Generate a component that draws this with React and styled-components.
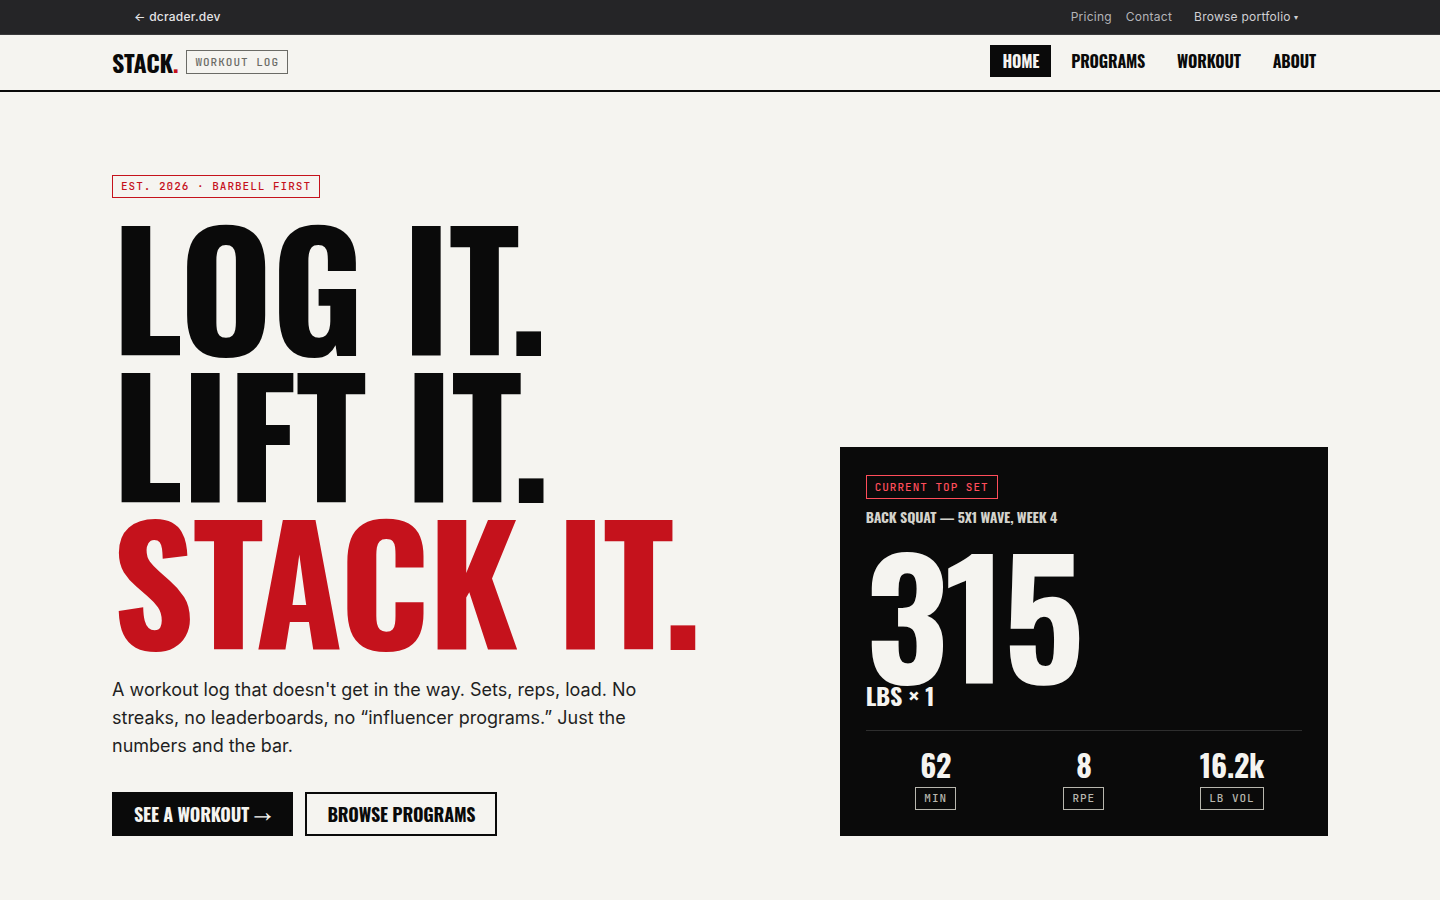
import React from "react";
import styled, { createGlobalStyle } from "styled-components";

const ink = "#0a0a0a";
const paper = "#f5f4f0";
const red = "#c5121c";
const display = `Oswald, "Noto Sans Math", "Liberation Sans", sans-serif`;
const mono = `"JetBrains Mono", "Liberation Mono", monospace`;

const Global = createGlobalStyle`
  *, *::before, *::after { box-sizing: border-box; }
  body {
    margin: 0;
    background: ${paper};
    color: ${ink};
    font: 16px/24px Inter, "Liberation Sans", sans-serif;
  }
  h1, h2, p, dl, dd { margin: 0; }
  a { color: inherit; text-decoration: none; }
`;

const SiteBar = styled.div`
  background: #252527;
  border-bottom: 1px solid #3a3a3c;
  font-size: 12px;
  line-height: 18px;
  letter-spacing: 0.02em;
`;

const SiteBarInner = styled.div`
  display: flex;
  justify-content: space-between;
  align-items: center;
  max-width: 1216px;
  margin: 0 auto;
  padding: 8px 22px;
`;

const HomeLink = styled.a`
  color: #e4e4e6;
  font-weight: 500;
`;

const SiteLinks = styled.nav`
  display: flex;
  align-items: center;
  gap: 14px;
  color: #b4b4b8;
`;

const PortfolioButton = styled.button`
  display: flex;
  align-items: center;
  gap: 3px;
  margin: 0;
  padding: 0 8px;
  border: 0;
  background: none;
  color: #d0d0d4;
  font: inherit;
  letter-spacing: inherit;
`;

const Caret = styled.span`
  font-size: 8px;
`;

const Header = styled.header`
  border-bottom: 2px solid ${ink};
`;

const HeaderInner = styled.div`
  display: flex;
  justify-content: space-between;
  align-items: flex-start;
  max-width: 1280px;
  margin: 0 auto;
  padding: 10px 32px 11px;
`;

const Brand = styled.a`
  display: flex;
  align-items: center;
  gap: 8px;
  font: 700 24px/34px ${display};
  letter-spacing: -0.01em;
`;

const Accent = styled.span`
  color: ${red};
`;

const Tag = styled.span`
  padding: 3px 8px;
  border: 1px solid currentColor;
  color: ${(p) => p.$color};
  font: 500 11px/${(p) => (p.$tall ? 16 : 15)}px ${mono};
  letter-spacing: 1px;
  text-transform: uppercase;
`;

const MainNav = styled.nav`
  display: flex;
  gap: 8px;
`;

const NavLink = styled.a`
  padding: 4px 12px;
  font: 700 16px/24px ${display};
  letter-spacing: -0.01em;
  text-transform: uppercase;
  background: ${(p) => (p["aria-current"] ? ink : "transparent")};
  color: ${(p) => (p["aria-current"] ? paper : ink)};
`;

const Hero = styled.main`
  display: grid;
  grid-template-columns: 1.4fr 1fr;
  gap: 44px;
  align-items: end;
  max-width: 1280px;
  margin: 0 auto;
  padding: 83px 32px 64px;
`;

const Intro = styled.section`
  display: flex;
  flex-direction: column;
  align-items: flex-start;
`;

const Headline = styled.h1`
  margin: 12px 0 25px;
  font: 700 160px/147px ${display};
  letter-spacing: -0.01em;
  text-transform: uppercase;
`;

const Line = styled.span`
  display: block;
  color: ${(p) => (p.$accent ? red : "inherit")};
`;

const Lede = styled.p`
  max-width: 544px;
  color: #1f1f1f;
  font-size: 18px;
  line-height: 28px;
`;

const Actions = styled.div`
  display: flex;
  gap: 12px;
  margin-top: 32px;
`;

const Action = styled.a`
  padding: 8px 20px;
  border: 2px solid ${ink};
  background: ${(p) => (p.$solid ? ink : "transparent")};
  color: ${(p) => (p.$solid ? paper : ink)};
  font: 700 18px/24px ${display};
  font-synthesis: none;
  letter-spacing: -0.01em;
  text-transform: uppercase;
`;

const Card = styled.section`
  display: flex;
  flex-direction: column;
  align-items: flex-start;
  padding: 28px 26px 26px;
  background: ${ink};
  color: ${paper};
`;

const Lift = styled.h2`
  margin-top: 8px;
  color: #d4d3cc;
  font: 700 14px/20px ${display};
  letter-spacing: -0.01em;
  text-transform: uppercase;
`;

const Load = styled.p`
  margin: 17px 0 2px;
  font: 700 160px/136px ${display};
  letter-spacing: -0.02em;
`;

const Unit = styled.p`
  font: 700 24px/26px ${display};
  letter-spacing: -0.01em;
`;

const Stats = styled.dl`
  display: grid;
  grid-template-columns: repeat(3, 1fr);
  gap: 8px;
  width: 100%;
  margin-top: 22px;
  padding-top: 16px;
  border-top: 1px solid #2e2e2e;
`;

const Stat = styled.div`
  display: flex;
  flex-direction: column-reverse;
  align-items: center;
  gap: 4px;
`;

const Value = styled.dd`
  font: 700 30px/36px ${display};
  letter-spacing: -0.01em;
`;

const stats = [
  ["Min", "62"],
  ["RPE", "8"],
  ["Lb vol", "16.2k"],
];

export default function App() {
  return (
    <>
      <Global />
      <SiteBar>
        <SiteBarInner>
          <HomeLink href="#">← dcrader.dev</HomeLink>
          <SiteLinks aria-label="Site">
            <a href="#pricing">Pricing</a>
            <a href="#contact">Contact</a>
            <PortfolioButton type="button">
              Browse portfolio <Caret aria-hidden="true">▾</Caret>
            </PortfolioButton>
          </SiteLinks>
        </SiteBarInner>
      </SiteBar>
      <Header>
        <HeaderInner>
          <Brand href="#home">
            <span>
              STACK<Accent>.</Accent>
            </span>
            <Tag $color="#6b6b66" $tall>Workout log</Tag>
          </Brand>
          <MainNav aria-label="Main">
            <NavLink href="#home" aria-current="page">Home</NavLink>
            <NavLink href="#programs">Programs</NavLink>
            <NavLink href="#workout">Workout</NavLink>
            <NavLink href="#about">About</NavLink>
          </MainNav>
        </HeaderInner>
      </Header>
      <Hero>
        <Intro>
          <Tag $color={red}>Est. 2026 · Barbell first</Tag>
          <Headline>
            <Line>Log it.</Line>
            <Line>Lift it.</Line>
            <Line $accent>Stack it.</Line>
          </Headline>
          <Lede>
            A workout log that doesn't get in the way. Sets, reps, load. No streaks, no
            leaderboards, no “influencer programs.” Just the numbers and the bar.
          </Lede>
          <Actions>
            <Action href="#workout" $solid>See a workout →</Action>
            <Action href="#programs">Browse programs</Action>
          </Actions>
        </Intro>
        <Card>
          <Tag $color="#ff4d5a" $tall>Current top set</Tag>
          <Lift>Back squat — 5x1 wave, week 4</Lift>
          <Load>315</Load>
          <Unit>LBS × 1</Unit>
          <Stats>
            {stats.map(([label, value]) => (
              <Stat key={label}>
                <Tag as="dt" $color="#b8b7ae">{label}</Tag>
                <Value>{value}</Value>
              </Stat>
            ))}
          </Stats>
        </Card>
      </Hero>
    </>
  );
}
